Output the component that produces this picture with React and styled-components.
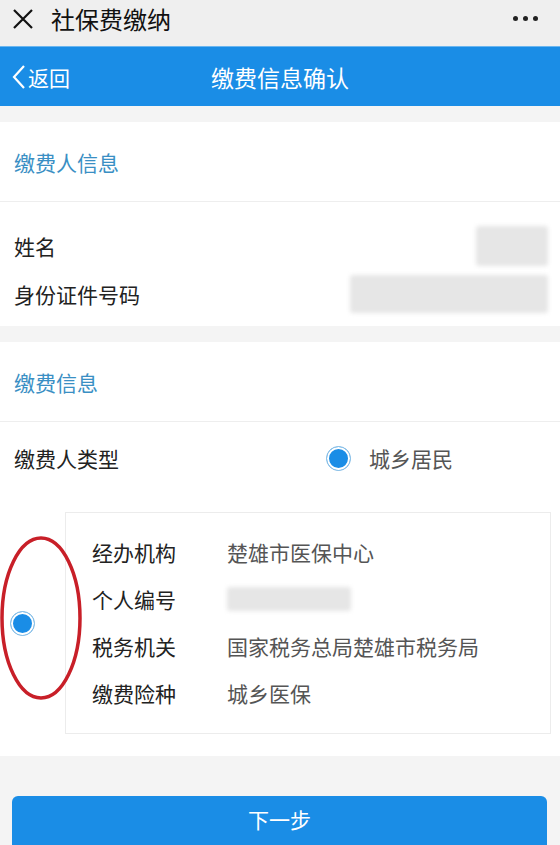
import React from 'react';
import styled, { createGlobalStyle } from 'styled-components';

const GlobalStyle = createGlobalStyle`
  html, body {
    margin: 0;
    padding: 0;
    background: #f4f4f4;
    font-family: "Noto Sans CJK SC", "Noto Sans", sans-serif;
  }
`;

const Page = styled.div`
  width: 560px;
  height: 845px;
  overflow: hidden;
  position: relative;
  background: #f4f4f4;
`;

const TopBar = styled.div`
  height: 46px;
  background: #efefef;
  display: flex;
  align-items: center;
  padding: 0 22px 0 12px;
  color: #111;
`;

const TopTitle = styled.div`
  font-size: 24px;
  margin-left: 17px;
  flex: 1;
  line-height: 1;
  margin-top: -8px;
`;

const Dots = styled.div`
  display: flex;
  gap: 5px;
  margin-top: -10px;
  span {
    width: 5px;
    height: 5px;
    border-radius: 50%;
    background: #222;
  }
`;

const NavBar = styled.div`
  height: 60px;
  background: #1a8de6;
  border-top: 1px solid #6bb6ef;
  box-sizing: border-box;
  display: grid;
  grid-template-columns: 1fr auto 1fr;
  align-items: center;
  color: #fff;
  padding: 0 12px;
`;

const Back = styled.div`
  display: flex;
  align-items: center;
  font-size: 21px;
  gap: 2px;
`;

const NavTitle = styled.div`
  font-size: 23px;
`;

const Section = styled.div`
  background: #fff;
  margin-top: 16px;
  padding-bottom: ${p => p.$pb || 0}px;
`;

const SectionHead = styled.div`
  height: 79px;
  display: flex;
  align-items: center;
  padding-left: 14px;
  font-size: 21px;
  color: #3a8fc4;
  border-bottom: 1px solid #eeeeee;
`;

const Rows = styled.div`
  padding: 20px 0 8px;
`;

const Row = styled.div`
  height: ${p => p.$h || 48}px;
  display: flex;
  align-items: center;
  justify-content: space-between;
  padding: 0 12px 0 14px;
  font-size: 21px;
  color: #222;
`;

const Blur = styled.div`
  width: ${p => p.$w}px;
  height: ${p => p.$h}px;
  background: #e6e6e6;
  filter: blur(2px);
  border-radius: 3px;
`;

const Choice = styled.div`
  display: flex;
  align-items: center;
  gap: 18px;
  width: 222px;
  color: #555;
`;

const Radio = styled.span`
  width: 25px;
  height: 25px;
  box-sizing: border-box;
  border-radius: 50%;
  border: 1px solid #8fc2e6;
  background: #1a8de6;
  box-shadow: inset 0 0 0 2px #fff;
  flex: none;
`;

const Option = styled.div`
  display: flex;
  align-items: center;
  margin-top: 18px;
  padding-right: 9px;
`;

const OptionSide = styled.div`
  width: 65px;
  display: flex;
  align-items: center;
  padding-left: 10px;
  box-sizing: border-box;
`;

const Card = styled.div`
  flex: 1;
  border: 1px solid #ececec;
  padding: 15px 0 17px;
`;

const CardRow = styled.div`
  height: 47px;
  display: flex;
  align-items: center;
  padding-left: 26px;
  font-size: 21px;
`;

const CardLabel = styled.div`
  width: 135px;
  color: #222;
`;

const CardValue = styled.div`
  color: #555;
`;

const Mark = styled.svg`
  position: absolute;
  left: 0;
  top: 535px;
`;

const Footer = styled.div`
  padding: 40px 13px 0 12px;
`;

const NextButton = styled.button`
  width: 100%;
  height: 64px;
  border: none;
  border-radius: 6px;
  background: #1a8de6;
  color: #fff;
  font-family: inherit;
  font-size: 21px;
  padding-bottom: 20px;
`;

export default function App() {
  return (
    <Page>
      <GlobalStyle />
      <TopBar>
        <svg width="22" height="22" viewBox="0 0 22 22" style={{ marginTop: -8 }}>
          <path d="M2 2 L20 20 M20 2 L2 20" stroke="#111" strokeWidth="2.2" />
        </svg>
        <TopTitle>社保费缴纳</TopTitle>
        <Dots><span /><span /><span /></Dots>
      </TopBar>
      <NavBar>
        <Back>
          <svg width="14" height="26" viewBox="0 0 14 26">
            <path d="M12 2 L2 13 L12 24" stroke="#fff" strokeWidth="2.2" fill="none" />
          </svg>
          返回
        </Back>
        <NavTitle>缴费信息确认</NavTitle>
        <div />
      </NavBar>

      <Section>
        <SectionHead>缴费人信息</SectionHead>
        <Rows>
          <Row>姓名<Blur $w={72} $h={40} /></Row>
          <Row>身份证件号码<Blur $w={198} $h={38} /></Row>
        </Rows>
      </Section>

      <Section $pb={22}>
        <SectionHead>缴费信息</SectionHead>
        <Row $h={72}>
          缴费人类型
          <Choice><Radio />城乡居民</Choice>
        </Row>
        <Option>
          <OptionSide><Radio /></OptionSide>
          <Card>
            <CardRow><CardLabel>经办机构</CardLabel><CardValue>楚雄市医保中心</CardValue></CardRow>
            <CardRow><CardLabel>个人编号</CardLabel><Blur $w={124} $h={24} /></CardRow>
            <CardRow><CardLabel>税务机关</CardLabel><CardValue>国家税务总局楚雄市税务局</CardValue></CardRow>
            <CardRow><CardLabel>缴费险种</CardLabel><CardValue>城乡医保</CardValue></CardRow>
          </Card>
        </Option>
      </Section>

      <Footer>
        <NextButton>下一步</NextButton>
      </Footer>

      <Mark width="90" height="170" viewBox="0 0 90 170">
        <ellipse cx="41" cy="83" rx="39" ry="80" fill="none" stroke="#c81f28" strokeWidth="3.5" />
      </Mark>
    </Page>
  );
}
